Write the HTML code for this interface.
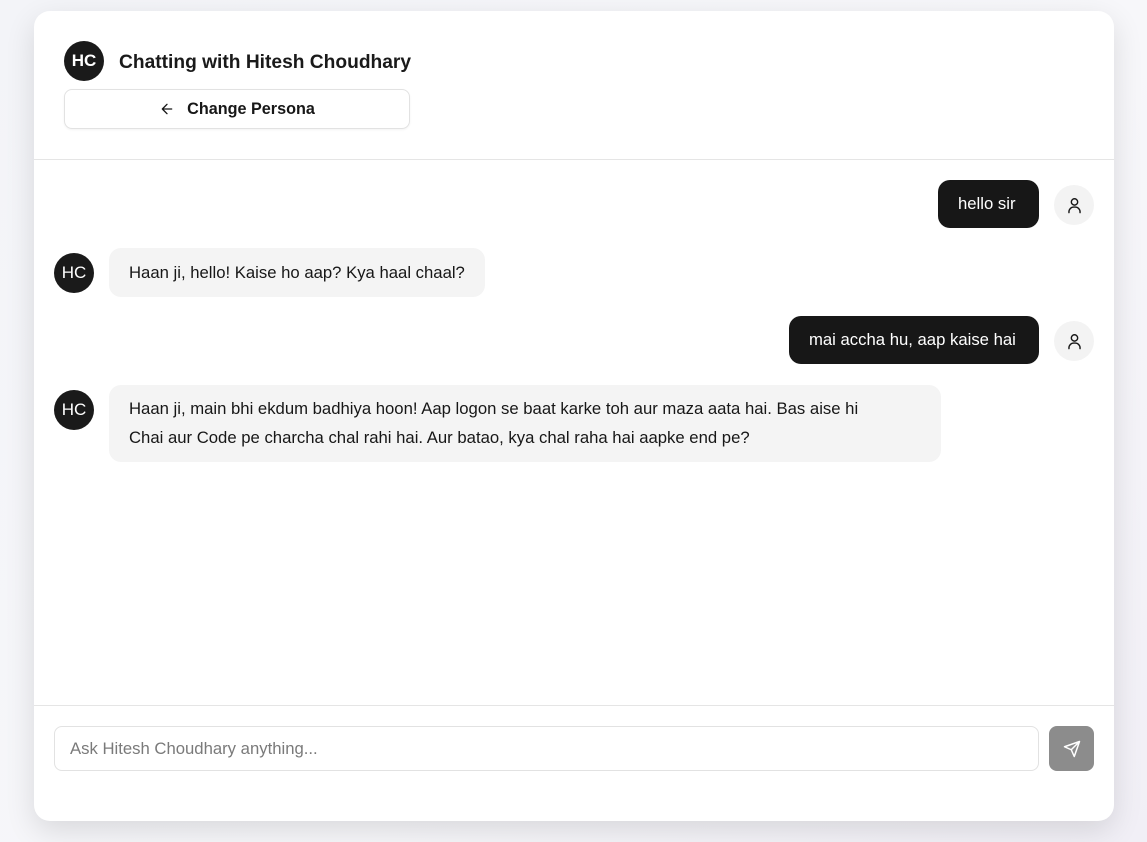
<!DOCTYPE html>
<html><head><style>
*{box-sizing:border-box;margin:0;padding:0}
body{width:1147px;height:842px;background:linear-gradient(135deg,#f3f4f8,#f7f7fa 60%,#f1eff6);font-family:"Liberation Sans",sans-serif;color:#171717;position:relative;overflow:hidden}
.card{position:absolute;left:34px;top:11px;width:1080px;height:810px;background:#fff;border-radius:16px;box-shadow:0 10px 30px rgba(0,0,0,.12)}
.hdr{position:absolute;left:0;top:0;width:100%;height:149px;border-bottom:1px solid #e5e5e5}
.av{position:absolute;width:40px;height:40px;border-radius:50%;background:#1a1a1a;color:#fff;display:flex;align-items:center;justify-content:center;font-size:17px}
.title{position:absolute;left:85px;top:41px;font-size:19.2px;font-weight:bold;color:#1a1a1a}
.btn{position:absolute;left:30px;top:78px;width:346px;height:40px;border:1px solid #e2e2e2;border-radius:8px;display:flex;align-items:center;justify-content:center;font-size:16.2px;font-weight:bold;gap:12px;box-shadow:0 1px 2px rgba(0,0,0,.05)}
.ub{position:absolute;background:#171717;color:#fff;border-radius:12px;height:48px;display:flex;align-items:center;padding:0 20px;font-size:16.7px}
.ua{position:absolute;left:1020px;width:40px;height:40px;border-radius:50%;background:#f3f3f3;display:flex;align-items:center;justify-content:center}
.ab{position:absolute;left:75px;background:#f4f4f4;border-radius:12px;padding:10px 20px;font-size:16.7px;line-height:29px}
.foot{position:absolute;left:0;top:694px;width:100%;border-top:1px solid #e5e5e5}
.inp{position:absolute;left:20px;top:715px;width:985px;height:45px;border:1px solid #e2e2e2;border-radius:8px;padding-left:15px;display:flex;align-items:center;color:#7a7a7a;font-size:16.7px}
.send{position:absolute;left:1015px;top:715px;width:45px;height:45px;border-radius:8px;background:#8c8c8c;display:flex;align-items:center;justify-content:center}
</style></head><body>
<div class="card">
 <div class="hdr">
  <div class="av" style="left:30px;top:30px;font-weight:bold">HC</div>
  <div class="title">Chatting with Hitesh Choudhary</div>
  <div class="btn"><svg width="16" height="16" viewBox="0 0 24 24" fill="none" stroke="#171717" stroke-width="2" stroke-linecap="round" stroke-linejoin="round"><path d="M19 12H5M12 19l-7-7 7-7"/></svg>Change Persona</div>
 </div>
 <div class="ub" style="left:904px;top:169px;width:101px">hello sir</div>
 <div class="ua" style="top:174px"><svg width="19" height="19" viewBox="0 0 24 24" fill="none" stroke="#171717" stroke-width="1.8" stroke-linecap="round"><circle cx="12" cy="7.5" r="4"/><path d="M5 21v-1a6 6 0 0 1 6-6h2a6 6 0 0 1 6 6v1"/></svg></div>
 <div class="av" style="left:20px;top:242px">HC</div>
 <div class="ab" style="top:237px">Haan ji, hello! Kaise ho aap? Kya haal chaal?</div>
 <div class="ub" style="left:755px;top:305px;width:250px">mai accha hu, aap kaise hai</div>
 <div class="ua" style="top:310px"><svg width="19" height="19" viewBox="0 0 24 24" fill="none" stroke="#171717" stroke-width="1.8" stroke-linecap="round"><circle cx="12" cy="7.5" r="4"/><path d="M5 21v-1a6 6 0 0 1 6-6h2a6 6 0 0 1 6 6v1"/></svg></div>
 <div class="av" style="left:20px;top:379px">HC</div>
 <div class="ab" style="top:374px;width:832px;padding-top:9px;padding-bottom:10px;padding-right:50px">Haan ji, main bhi ekdum badhiya hoon! Aap logon se baat karke toh aur maza aata hai. Bas aise hi<br>Chai aur Code pe charcha chal rahi hai. Aur batao, kya chal raha hai aapke end pe?</div>
 <div class="foot"></div>
 <div class="inp">Ask Hitesh Choudhary anything...</div>
 <div class="send"><svg width="18" height="18" viewBox="0 0 24 24" fill="none" stroke="#fff" stroke-width="2" stroke-linejoin="round" stroke-linecap="round"><path d="M22 2L11 13M22 2l-7 20-4-9-9-4z"/></svg></div>
</div>
</body></html>
